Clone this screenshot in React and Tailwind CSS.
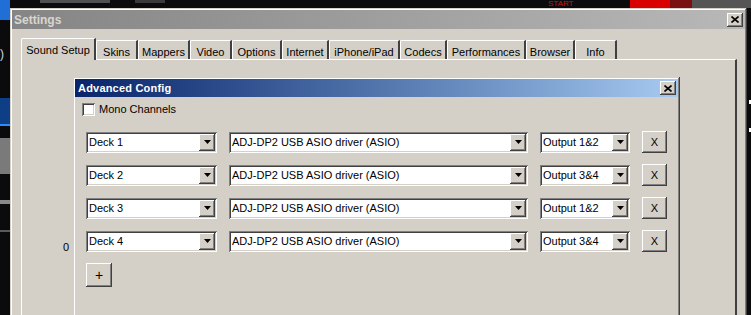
const raised =
  "shadow-[inset_-1px_-1px_#404040,inset_1px_1px_#ffffff,inset_-2px_-2px_#808080,inset_2px_2px_#d4d0c8]";

function Arrow() {
  return (
    <svg width="7" height="4" viewBox="0 0 7 4">
      <path d="M0 0h7L3.5 4z" fill="#000" />
    </svg>
  );
}

function CloseBox() {
  return (
    <div className="w-[16px] h-[14px] bg-[#d4d0c8] flex items-center justify-center shadow-[inset_-1px_-1px_#404040,inset_1px_1px_#ffffff,inset_-2px_-2px_#808080,inset_2px_2px_#d4d0c8]">
      <svg width="8" height="7" viewBox="0 0 8 7">
        <path d="M0.5 0.5L7.5 6.5M7.5 0.5L0.5 6.5" stroke="#000" strokeWidth="1.6" />
      </svg>
    </div>
  );
}

function Select({ width, label }) {
  return (
    <div
      className={`flex h-[21px] bg-white p-[2px] shadow-[inset_1px_1px_#808080,inset_-1px_-1px_#ffffff,inset_2px_2px_#404040,inset_-2px_-2px_#d4d0c8] ${width}`}
    >
      <span className="flex-1 pl-[1px] text-[11px] leading-[17px] text-black whitespace-nowrap overflow-hidden">
        {label}
      </span>
      <div className={`w-[16px] h-full bg-[#d4d0c8] flex items-center justify-center ${raised}`}>
        <Arrow />
      </div>
    </div>
  );
}

const rows = [
  { deck: "Deck 1", out: "Output 1&2" },
  { deck: "Deck 2", out: "Output 3&4" },
  { deck: "Deck 3", out: "Output 1&2" },
  { deck: "Deck 4", out: "Output 3&4" },
];

const tabs = [
  { name: "Skins", w: "w-[42px]" },
  { name: "Mappers", w: "w-[52px]" },
  { name: "Video", w: "w-[42px]" },
  { name: "Options", w: "w-[50px]" },
  { name: "Internet", w: "w-[47px]" },
  { name: "iPhone/iPad", w: "w-[71px]" },
  { name: "Codecs", w: "w-[47px]" },
  { name: "Performances", w: "w-[79px]" },
  { name: "Browser", w: "w-[49px]" },
  { name: "Info", w: "w-[42px]" },
];

export default function App() {
  return (
    <div className="relative w-[751px] h-[315px] overflow-hidden bg-[#0b0b0e] font-['Liberation_Sans',Arial,sans-serif]">
      {/* backdrop app peeking around the window */}
      <div className="absolute left-0 top-0 w-[10px] h-[20px] bg-[#1f6fd6]" />
      <div className="absolute left-0 top-[48px] text-[12px] text-[#cfd8e8] leading-none">)</div>
      <div className="absolute left-0 top-[98px] w-[10px] h-[28px] bg-[#0e3f86] border-b-2 border-[#2a8cff]" />
      <div className="absolute left-0 top-[138px] w-[10px] h-[36px] bg-[#7a7a7a]" />
      <div className="absolute left-0 top-[200px] w-[10px] h-[4px] bg-[#8a8a8a]" />
      <div className="absolute left-0 top-[230px] w-[10px] h-[2px] bg-[#5a5a5a]" />
      <div className="absolute left-[40px] top-0 w-[70px] h-[3px] bg-[#505050]" />
      <div className="absolute left-[135px] top-0 w-[30px] h-[3px] bg-[#3a3a3a]" />
      <div className="absolute left-[548px] top-0 text-[8px] leading-[8px] text-[#d01010]">START</div>
      <div className="absolute left-[630px] top-0 w-[40px] h-[8px] bg-[#d80000]" />
      <div className="absolute left-[670px] top-0 w-[22px] h-[8px] bg-[#7a1010]" />
      <div className="absolute left-[692px] top-0 w-[59px] h-[8px] bg-[#555555]" />

      {/* Settings window */}
      <div className="absolute left-[10px] top-[8px] w-[737px] h-[320px] bg-[#d4d0c8] p-[2px] shadow-[inset_-1px_-1px_#404040,inset_1px_1px_#d4d0c8,inset_-2px_-2px_#808080,inset_2px_2px_#ffffff]">
        <div className="h-[19px] flex items-center justify-between pl-[2px] pr-[2px] bg-gradient-to-r from-[#858585] to-[#b8b8b8]">
          <span className="text-[12px] font-bold text-[#d8d6d0] leading-none">Settings</span>
          <CloseBox />
        </div>

        <div className="pl-[9px] pt-[8px] pr-[7px]">
          {/* tab strip */}
          <div className="flex items-end h-[22px] relative z-10">
            <div className="w-[75px] h-[22px] mb-[-1px] bg-[#d4d0c8] border-t border-l border-white border-r-2 border-r-[#404040] rounded-tl-[2px] text-[11px] flex items-start justify-center pt-[3px] text-black">
              Sound Setup
            </div>
            {tabs.map((t) => (
              <div
                key={t.name}
                className={`${t.w} h-[19px] bg-[#d4d0c8] border-t border-l border-white border-r-2 border-r-[#404040] rounded-tl-[2px] text-[11px] flex items-start justify-center pt-[3px] text-black`}
              >
                {t.name}
              </div>
            ))}
          </div>

          {/* tab panel */}
          <div className="relative w-[716px] h-[260px] border-t border-l border-white border-r-2 border-r-[#404040]">
            <span className="absolute left-[41px] top-[179px] text-[11px] text-black">0</span>

            {/* Advanced Config dialog */}
            <div className="absolute left-[51px] top-[17px] w-[607px] h-[260px] bg-[#d4d0c8] p-[2px] shadow-[inset_-1px_-1px_#404040,inset_1px_1px_#d4d0c8,inset_-2px_-2px_#808080,inset_2px_2px_#ffffff]">
              <div className="h-[18px] flex items-center justify-between pl-[3px] pr-[2px] bg-gradient-to-r from-[#0a246a] to-[#a6caf0]">
                <span className="text-[11px] font-bold text-white leading-none tracking-[0.2px]">Advanced Config</span>
                <CloseBox />
              </div>

              <div className="flex items-center gap-[4px] pl-[7px] pt-[6px]">
                <div className="w-[13px] h-[13px] bg-white shadow-[inset_1px_1px_#808080,inset_-1px_-1px_#ffffff,inset_2px_2px_#404040,inset_-2px_-2px_#d4d0c8]" />
                <span className="text-[11px] text-black leading-none">Mono Channels</span>
              </div>

              <div className="flex flex-col gap-[11px] pl-[11px] pt-[15px]">
                {rows.map((r) => (
                  <div key={r.deck} className="flex items-center gap-[12px] h-[22px]">
                    <Select width="w-[131px]" label={r.deck} />
                    <Select width="w-[299px]" label="ADJ-DP2 USB ASIO driver (ASIO)" />
                    <Select width="w-[90px]" label={r.out} />
                    <button className={`w-[25px] h-[22px] bg-[#d4d0c8] text-[11px] text-black flex items-center justify-center ${raised}`}>
                      X
                    </button>
                  </div>
                ))}
                <button className={`w-[26px] h-[24px] bg-[#d4d0c8] text-[14px] text-black flex items-center justify-center ${raised}`}>
                  +
                </button>
              </div>
            </div>
          </div>
        </div>
      </div>

      <div className="absolute right-0 top-[100px] w-[2px] h-[4px] bg-white" />
      <div className="absolute right-0 top-[128px] w-[2px] h-[4px] bg-white" />
    </div>
  );
}
